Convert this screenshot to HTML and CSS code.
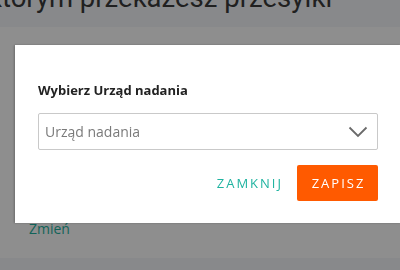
FILE: index.html
```html
<!DOCTYPE html>
<html lang="pl">
<head>
<meta charset="utf-8">
<link rel="stylesheet" href="styles.css">
</head>
<body>
<div class="page">
  <header class="page-head">
    <h1 class="page-title">którym przekażesz przesyłki</h1>
  </header>
  <main class="page-body">
    <a class="link" href="#">Zmień</a>
  </main>
  <footer class="page-foot"></footer>
</div>
<div class="overlay"></div>
<div class="modal">
  <h2 class="modal-title">Wybierz Urząd nadania</h2>
  <div class="select">
    <span class="select-placeholder">Urząd nadania</span>
    <svg class="chevron" width="20" height="12" viewBox="0 0 20 12"><path d="M1.5 1.5 L10 10 L18.5 1.5" fill="none" stroke="#6a6a6a" stroke-width="1.8"/></svg>
  </div>
  <div class="actions">
    <button class="btn btn-text">ZAMKNIJ</button>
    <button class="btn btn-primary">ZAPISZ</button>
  </div>
</div>
</body>
</html>
```
FILE: styles.css
```css
html, body {
  margin: 0;
  padding: 0;
  width: 400px;
  height: 270px;
  overflow: hidden;
  font-family: "Open Sans", "Noto Sans", sans-serif;
}
.page {
  display: flex;
  flex-direction: column;
  height: 270px;
  background: #ffffff;
}
.page-head {
  height: 27px;
  background: #f5f6f9;
  overflow: hidden;
  flex: none;
}
.page-title {
  margin: -22px 0 0 -12px;
  font-family: Roboto, "Open Sans", sans-serif;
  font-size: 27.5px;
  font-weight: 400;
  line-height: 40px;
  color: #3a3a3a;
  white-space: nowrap;
}
.page-body {
  flex: 1;
  padding: 190px 0 0 29px;
  box-sizing: border-box;
}
.link {
  font-size: 14px;
  color: #1fb3a0;
  text-decoration: none;
  line-height: 20px;
}
.page-foot {
  height: 12px;
  background: #f5f6f9;
  flex: none;
}
.overlay {
  position: fixed;
  inset: 0;
  background: rgba(0, 0, 0, 0.443);
}
.modal {
  position: fixed;
  left: 15px;
  top: 45px;
  right: -1px;
  height: 178px;
  background: #fff;
  box-shadow: -1px 0 2px rgba(0, 0, 0, 0.25);
  padding: 36px 23px 0 23px;
  box-sizing: border-box;
}
.modal-title {
  margin: 0;
  font-size: 13px;
  font-weight: 700;
  line-height: 18px;
  color: #222;
}
.select {
  margin-top: 14px;
  height: 37px;
  width: 340px;
  box-sizing: border-box;
  border: 1px solid #c9c9c9;
  border-radius: 2px;
  display: flex;
  align-items: center;
  justify-content: space-between;
  padding: 0 8px 0 6px;
}
.select-placeholder {
  font-size: 14px;
  color: #7a7a7a;
}
.chevron {
  display: block;
  margin-right: 1px;
}
.actions {
  margin-top: 15px;
  width: 340px;
  display: flex;
  justify-content: flex-end;
  align-items: center;
  gap: 14px;
}
.btn {
  font-family: "Open Sans", "Noto Sans", sans-serif;
  font-size: 13px;
  letter-spacing: 2px;
  border: 0;
  border-radius: 2px;
  height: 36px;
  cursor: pointer;
}
.btn-text {
  background: transparent;
  color: #1fb3a0;
  padding: 0;
}
.btn-primary {
  background: #ff5a00;
  color: #fff;
  width: 81px;
  padding: 0 0 0 2px;
}
```
